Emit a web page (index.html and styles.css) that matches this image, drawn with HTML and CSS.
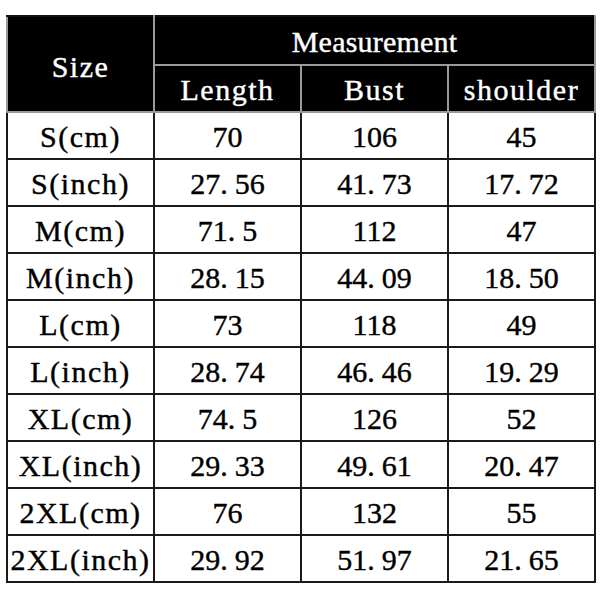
FILE: index.html
```html
<!DOCTYPE html>
<html>
<head>
<meta charset="utf-8">
<link rel="stylesheet" href="styles.css">
</head>
<body>
<table class="chart">
  <colgroup><col class="c"><col class="c"><col class="c"><col class="c"></colgroup>
  <thead>
    <tr class="h1">
      <th rowspan="2" class="lbl size">Size</th>
      <th colspan="3" class="meas">Measurement</th>
    </tr>
    <tr class="h2">
      <th class="lbl">Length</th>
      <th class="lbl">Bust</th>
      <th class="lbl">shoulder</th>
    </tr>
  </thead>
  <tbody>
    <tr><td class="lbl">S(cm)</td><td>70</td><td>106</td><td>45</td></tr>
    <tr><td class="lbl">S(inch)</td><td>27<span class="dot">.</span>56</td><td>41<span class="dot">.</span>73</td><td>17<span class="dot">.</span>72</td></tr>
    <tr><td class="lbl">M(cm)</td><td>71<span class="dot">.</span>5</td><td>112</td><td>47</td></tr>
    <tr><td class="lbl">M(inch)</td><td>28<span class="dot">.</span>15</td><td>44<span class="dot">.</span>09</td><td>18<span class="dot">.</span>50</td></tr>
    <tr><td class="lbl">L(cm)</td><td>73</td><td>118</td><td>49</td></tr>
    <tr><td class="lbl">L(inch)</td><td>28<span class="dot">.</span>74</td><td>46<span class="dot">.</span>46</td><td>19<span class="dot">.</span>29</td></tr>
    <tr><td class="lbl">XL(cm)</td><td>74<span class="dot">.</span>5</td><td>126</td><td>52</td></tr>
    <tr><td class="lbl">XL(inch)</td><td>29<span class="dot">.</span>33</td><td>49<span class="dot">.</span>61</td><td>20<span class="dot">.</span>47</td></tr>
    <tr><td class="lbl">2XL(cm)</td><td>76</td><td>132</td><td>55</td></tr>
    <tr><td class="lbl">2XL(inch)</td><td>29<span class="dot">.</span>92</td><td>51<span class="dot">.</span>97</td><td>21<span class="dot">.</span>65</td></tr>
  </tbody>
</table>
</body>
</html>
```
FILE: styles.css
```css
html, body {
  margin: 0;
  padding: 0;
  background: #ffffff;
}

body {
  padding: 15px 0 0 6px;
}

.chart {
  border-collapse: collapse;
  table-layout: fixed;
  width: 588px;
  font-family: "Liberation Serif", "Times New Roman", serif;
  font-size: 30px;
  color: #000;
  border: 2px solid #111;
  -webkit-text-stroke: 0.4px currentColor;
}

.chart col.c {
  width: 147px;
}

.chart th,
.chart td {
  box-sizing: border-box;
  padding: 3px 0 0 0;
  text-align: center;
  vertical-align: middle;
  line-height: 30px;
  white-space: nowrap;
  overflow: hidden;
}

.chart th {
  background: #000;
  color: #fff;
  font-weight: normal;
  border: 2px solid #9a9a9a;
}

.chart td {
  background: #fff;
  border: 2px solid #1a1a1a;
}

.chart tr.h1 {
  height: 49px;
}

.chart tr.h1 th {
  border-top-color: #111;
  padding-top: 2px;
}

.chart tr.h1 th.size {
  padding-top: 6px;
}

.chart tr.h2 {
  height: 47px;
}

.chart tbody tr {
  height: 47px;
}

.lbl {
  letter-spacing: 1.5px;
}

.meas {
  letter-spacing: 0.2px;
}

.dot {
  letter-spacing: 7px;
}
```
